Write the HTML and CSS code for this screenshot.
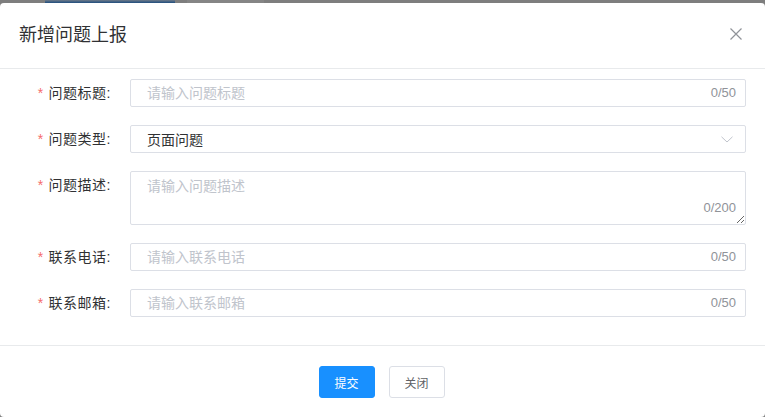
FILE: index.html
```html
<!DOCTYPE html>
<html lang="zh-CN">
<head>
<meta charset="utf-8">
<title>新增问题上报</title>
<link rel="stylesheet" href="styles.css">
</head>
<body>
<div class="backdrop-strip">
  <span class="seg seg-a"></span>
  <span class="seg seg-blue"></span>
  <span class="seg seg-b"></span>
  <span class="seg seg-light"></span>
  <span class="seg seg-rest"></span>
</div>
<div class="dialog">
  <div class="dialog-header">
    <span class="dialog-title">新增问题上报</span>
    <button class="dialog-close" aria-label="关闭">
      <svg width="12" height="12" viewBox="0 0 12 12"><path d="M0.5 0.5 L11.5 11.5 M11.5 0.5 L0.5 11.5" stroke="#909399" stroke-width="1.2" fill="none"/></svg>
    </button>
  </div>
  <div class="dialog-body">
    <div class="form-item">
      <label class="form-label"><span class="req">*</span>问题标题:</label>
      <div class="input">
        <input class="input-inner" placeholder="请输入问题标题">
        <span class="count">0/50</span>
      </div>
    </div>
    <div class="form-item">
      <label class="form-label"><span class="req">*</span>问题类型:</label>
      <div class="input select">
        <span class="select-value">页面问题</span>
        <svg class="chevron" width="12" height="7" viewBox="0 0 12 7"><path d="M0.5 0.8 L6 6 L11.5 0.8" stroke="#c0c4cc" stroke-width="1" fill="none"/></svg>
      </div>
    </div>
    <div class="form-item">
      <label class="form-label"><span class="req">*</span>问题描述:</label>
      <div class="textarea">
        <textarea class="textarea-inner" placeholder="请输入问题描述"></textarea>
        <span class="count count-ta">0/200</span>
      </div>
    </div>
    <div class="form-item">
      <label class="form-label"><span class="req">*</span>联系电话:</label>
      <div class="input">
        <input class="input-inner" placeholder="请输入联系电话">
        <span class="count">0/50</span>
      </div>
    </div>
    <div class="form-item last">
      <label class="form-label"><span class="req">*</span>联系邮箱:</label>
      <div class="input">
        <input class="input-inner" placeholder="请输入联系邮箱">
        <span class="count">0/50</span>
      </div>
    </div>
  </div>
  <div class="dialog-footer">
    <button class="btn btn-primary">提交</button>
    <button class="btn btn-default">关闭</button>
  </div>
</div>
</body>
</html>
```
FILE: styles.css
```css
* { box-sizing: border-box; }
html, body {
  margin: 0;
  padding: 0;
  background: #808080;
  font-family: "Liberation Sans", "Noto Sans CJK SC", sans-serif;
  width: 765px;
  height: 417px;
  overflow: hidden;
}
.backdrop-strip {
  height: 3px;
  display: flex;
}
.seg { display: block; height: 3px; }
.seg-a { width: 45px; background: #7e7e7e; }
.seg-blue { width: 130px; background: linear-gradient(#6e7a88 0, #1f4d7e 100%); }
.seg-b { width: 12px; background: #7e7e7e; }
.seg-light { width: 77px; background: #858585; }
.seg-rest { flex: 1; background: #7e7e7e; }

.dialog {
  background: #fff;
  border-radius: 4px;
  height: 414px;
  display: flex;
  flex-direction: column;
}
.dialog-header {
  height: 66px;
  padding: 0 20px 0 19px;
  border-bottom: 1px solid #e8eaec;
  display: flex;
  align-items: center;
  justify-content: space-between;
}
.dialog-title {
  font-size: 18px;
  line-height: 24px;
  color: #303133;
  margin-top: -1px;
}
.dialog-close {
  border: none;
  background: none;
  padding: 0;
  width: 12px;
  height: 12px;
  margin-right: 3px;
  margin-top: -4px;
  display: flex;
}
.dialog-body {
  padding: 10px 19px 28px 0;
  flex: 0 0 auto;
  height: 276px;
}
.form-item {
  display: flex;
  align-items: flex-start;
  margin-bottom: 18px;
}
.form-item.last { margin-bottom: 0; }
.form-label {
  width: 130px;
  padding-right: 19px;
  text-align: right;
  font-size: 14px;
  line-height: 28px;
  color: #303133;
  flex: none;
  letter-spacing: 0.5px;
}
.req {
  color: #f56c6c;
  margin-right: 5px;
  font-size: 14px;
}
.input {
  flex: 1;
  height: 28px;
  border: 1px solid #dcdfe6;
  border-radius: 2px;
  display: flex;
  align-items: center;
  padding: 0 9px 0 16px;
}
.input-inner {
  flex: 1;
  border: none;
  outline: none;
  padding: 0;
  font-family: inherit;
  font-size: 14px;
  color: #303133;
  background: transparent;
  min-width: 0;
}
.input-inner::placeholder, .textarea-inner::placeholder {
  color: #c0c4cc;
}
.count {
  font-size: 13px;
  color: #909399;
  line-height: 16px;
}
.select-value {
  flex: 1;
  font-size: 14px;
  color: #303133;
}
.chevron { margin-right: 3px; }
.textarea {
  flex: 1;
  height: 54px;
  position: relative;
  display: flex;
}
.textarea-inner {
  flex: 1;
  height: 54px;
  border: 1px solid #dcdfe6;
  border-radius: 2px;
  padding: 4px 16px;
  font-family: inherit;
  font-size: 14px;
  line-height: 21px;
  resize: vertical;
  outline: none;
}
.count-ta {
  position: absolute;
  right: 10px;
  bottom: 9px;
}
.dialog-footer {
  border-top: 1px solid #e8eaec;
  padding: 20px 2px 0 0;
  display: flex;
  justify-content: center;
  gap: 14px;
}
.btn {
  width: 56px;
  height: 32px;
  font-family: inherit;
  font-size: 12px;
  border-radius: 3px;
  padding: 0;
  cursor: pointer;
}
.btn-primary {
  background: #1890ff;
  border: 1px solid #1890ff;
  color: #fff;
}
.btn-default {
  background: #fff;
  border: 1px solid #dcdfe6;
  color: #606266;
}
```
